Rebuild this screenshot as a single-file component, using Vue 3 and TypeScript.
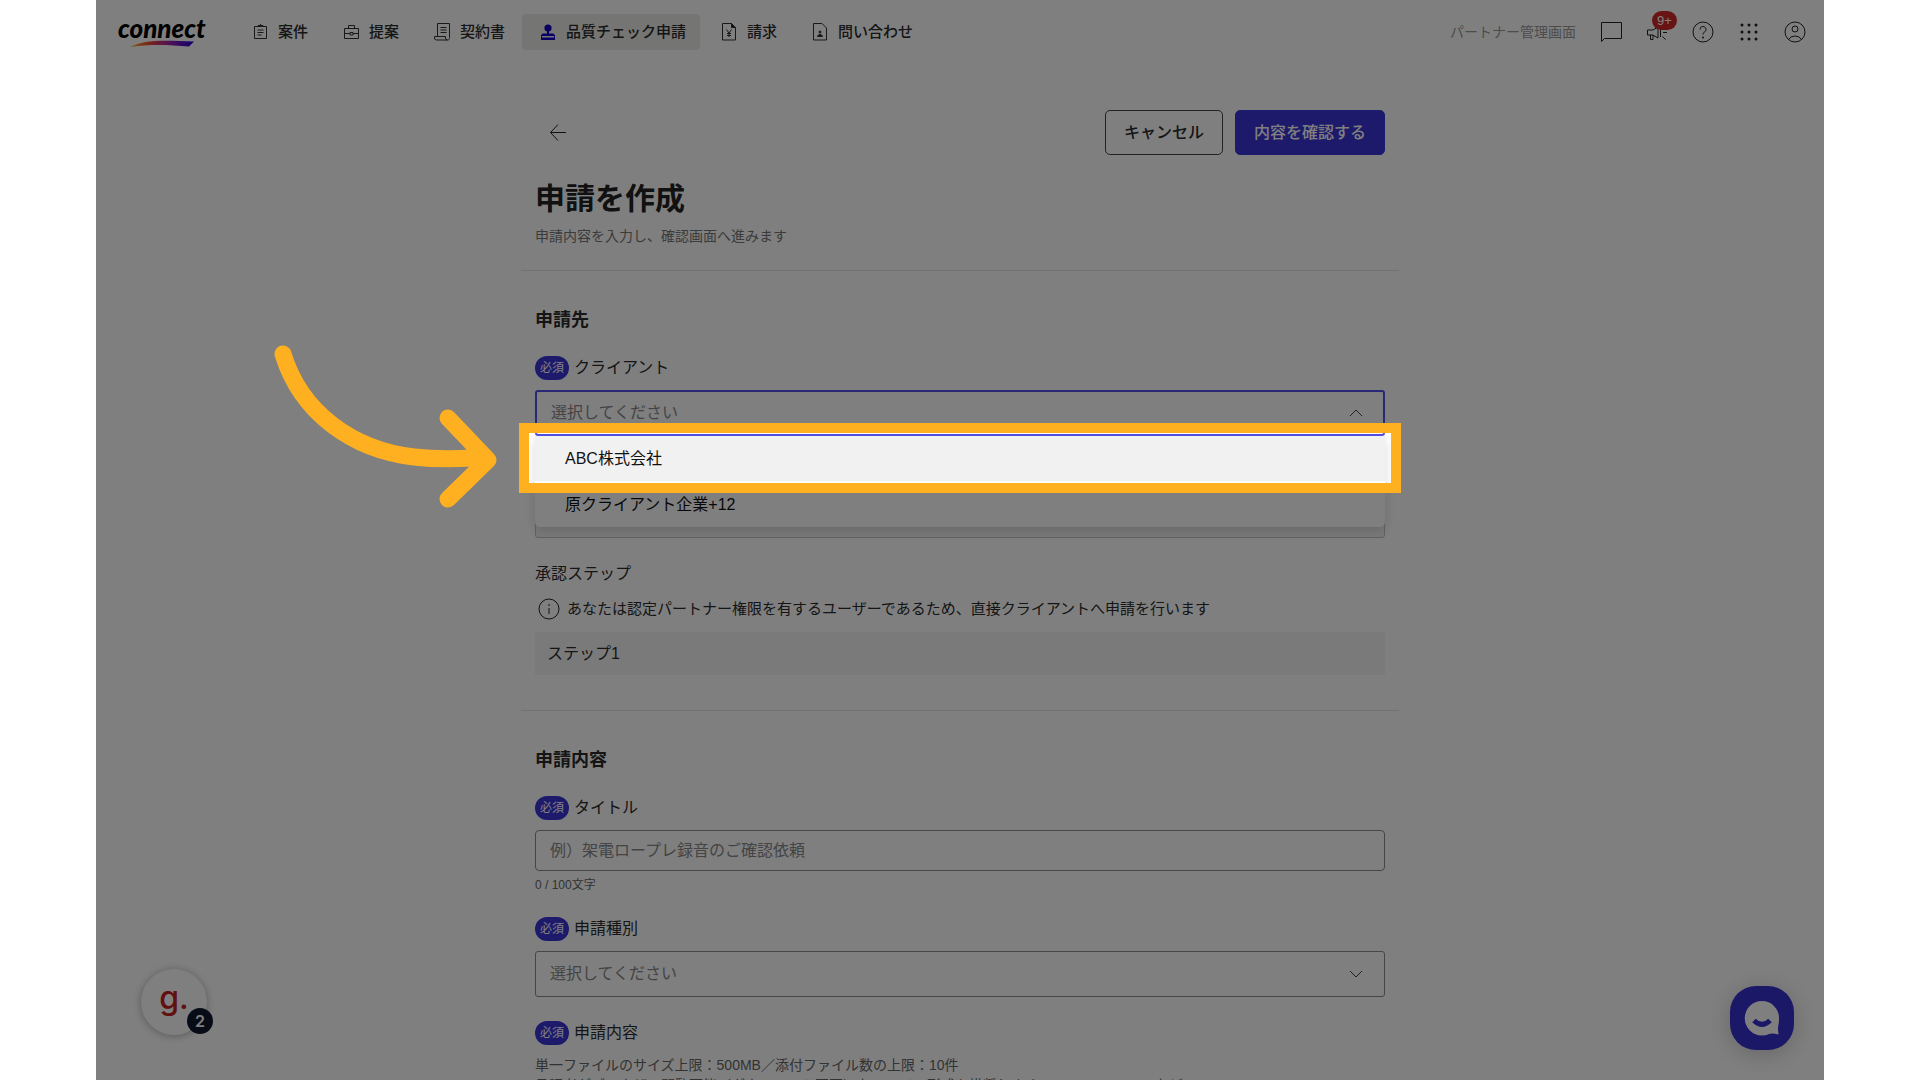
<script setup lang="ts">
import { ref } from 'vue'

interface NavItem {
  label: string
  icon: string
  active?: boolean
}

const navItems: NavItem[] = [
  { label: '案件', icon: 'clipboard' },
  { label: '提案', icon: 'case' },
  { label: '契約書', icon: 'scroll' },
  { label: '品質チェック申請', icon: 'stamp', active: true },
  { label: '請求', icon: 'invoice' },
  { label: '問い合わせ', icon: 'contact' },
]

const clients: string[] = ['ABC株式会社', '原クライアント企業+12']
const highlighted = ref(0)
const title = ref('')
</script>

<template>
  <div class="screen">
    <header class="header">
      <a class="logo" href="#" aria-label="connect">
        <span class="logo-text">connect</span>
        <svg class="logo-swoosh" viewBox="0 0 64 8" aria-hidden="true">
          <defs>
            <linearGradient id="swoosh" x1="0" x2="1">
              <stop offset="0" stop-color="#ffb020" />
              <stop offset=".3" stop-color="#f04a30" />
              <stop offset=".62" stop-color="#a020b0" />
              <stop offset="1" stop-color="#1a00e0" />
            </linearGradient>
          </defs>
          <path d="M0 7C14 0 30 0 64 1.500L59 6.500C40 5 20 4 0 7Z" fill="url(#swoosh)" />
        </svg>
      </a>

      <nav class="nav">
        <a
          v-for="item in navItems"
          :key="item.label"
          href="#"
          class="nav-item"
          :class="{ active: item.active }"
        >
          <svg class="nav-icon" viewBox="0 0 16 18" aria-hidden="true">
            <g v-if="item.icon === 'clipboard'">
              <path d="M2.500 3.500h12v12h-12zM6 3.500v-1h5v1M5.500 7h6M5.500 9.500h6M5.500 12h4" />
              <path d="M8.500 1v1.500" />
            </g>
            <g v-else-if="item.icon === 'case'">
              <path d="M1.500 5.500h14v10h-14zM5.500 5.500v-3h6v3M1.500 10.500h5.500M10 10.500h5.500M7 9.500h3v2.500h-3z" />
            </g>
            <g v-else-if="item.icon === 'scroll'">
              <path d="M3.500 13.500v-13h12v14a2 2 0 0 1-2 2.500h-11a2 2 0 0 1-2-2v-1.500h11v1.500a2 2 0 0 0 2 2M6.500 4.500h6M6.500 7h6M6.500 9.500h6" />
            </g>
            <g v-else-if="item.icon === 'stamp'" class="solid">
              <circle cx="8" cy="5" r="3.600" />
              <path d="M7 8h2v3H7z" />
              <path d="M1.500 13v-1a1.500 1.500 0 0 1 1.500-1.500h10a1.500 1.500 0 0 1 1.500 1.500v1zM1 14.500h14v2.500H1z" />
              <path class="line" d="M1.500 12v4M14.500 12v4" />
            </g>
            <g v-else-if="item.icon === 'invoice'">
              <path d="M1.500.500h9l4 4v12.500h-13zM5.500 6.500l2.500 3.500 2.500-3.500M8 10v4M6 10.500h4M6 12.500h4" />
              <path class="fill" d="M10.500.500v4h4z" />
            </g>
            <g v-else>
              <path d="M1.500.500h8.500l4.500 4.500v12h-13z" />
              <circle class="fill" cx="8" cy="9" r="1" />
              <path class="fill" d="M5.500 13.500q.5-2 2.500-2t2.500 2z" />
            </g>
          </svg>
          <span>{{ item.label }}</span>
        </a>
      </nav>

      <div class="tools">
        <a class="admin-link" href="#">パートナー管理画面</a>
        <button class="tool" type="button" aria-label="チャット">
          <svg viewBox="0 0 22 22"><path d="M1.500 1.500h20v16h-17l-3 3z" /></svg>
        </button>
        <button class="tool" type="button" aria-label="お知らせ">
          <svg viewBox="0 0 22 22">
            <path d="M1.500 9h5.500l5-3v11l-5-3h-5.500zM4.500 14v4.500h2.500v-4.500M14.500 7v9M17 11.500h4M16.500 15.500l3 3" />
          </svg>
          <span class="count">9+</span>
        </button>
        <button class="tool" type="button" aria-label="ヘルプ">
          <svg viewBox="0 0 22 22">
            <circle cx="11" cy="11" r="10" />
            <path d="M8 8.500a3 3 0 1 1 4.500 2.500q-1.500 1-1.500 2.500" />
            <circle class="dot" cx="11" cy="16.500" r="1" />
          </svg>
        </button>
        <button class="tool" type="button" aria-label="アプリ一覧">
          <svg viewBox="0 0 22 22">
            <template v-for="y in [4, 11, 18]" :key="y">
              <circle v-for="x in [4, 11, 18]" :key="x" class="dot" :cx="x" :cy="y" r="1.500" />
            </template>
          </svg>
        </button>
        <button class="tool" type="button" aria-label="アカウント">
          <svg viewBox="0 0 22 22">
            <circle cx="11" cy="11" r="10" />
            <circle cx="11" cy="8" r="3" />
            <path d="M4.500 18.500q2-3.500 6.500-3.500t6.500 3.500" />
          </svg>
        </button>
      </div>
    </header>

    <main class="main">
      <section class="intro">
        <div class="actions">
          <button class="back" type="button" aria-label="戻る">
            <svg viewBox="0 0 18 18"><path d="M17 8.500H1.500M9 .500L1.500 8.500l7.500 8" /></svg>
          </button>
          <button class="btn outline" type="button">キャンセル</button>
          <button class="btn primary" type="button">内容を確認する</button>
        </div>
        <h1>申請を作成</h1>
        <p class="lead">申請内容を入力し、確認画面へ進みます</p>
      </section>

      <section class="block">
        <h2>申請先</h2>
        <label class="label" for="client"><span class="required">必須</span>クライアント</label>
        <div class="select-box open">
          <select id="client">
            <option>選択してください</option>
          </select>
          <svg class="chevron" viewBox="0 0 14 8"><path d="M1 7l6-6 6 6" /></svg>
          <ul class="menu" role="listbox">
            <li
              v-for="(client, index) in clients"
              :key="client"
              role="option"
              :aria-selected="index === highlighted"
              :class="{ hover: index === highlighted }"
            >
              {{ client }}
            </li>
          </ul>
          <div class="spotlight"></div>
          <svg class="pointer" viewBox="0 0 224 164" aria-hidden="true">
            <path d="M10 9C28 68 80 105 141 112Q167 115 200 113M175 73L215 115L175 154" />
          </svg>
        </div>
        <div class="select-box approver">
          <select disabled aria-label="申請先"></select>
        </div>

        <h3>承認ステップ</h3>
        <p class="info">
          <svg viewBox="0 0 22 22"><circle cx="11" cy="11" r="10" /><path d="M11 10v6M11 6v2" /></svg>
          あなたは認定パートナー権限を有するユーザーであるため、直接クライアントへ申請を行います
        </p>
        <div class="step">ステップ1</div>
      </section>

      <section class="block">
        <h2>申請内容</h2>
        <label class="label" for="title"><span class="required">必須</span>タイトル</label>
        <input id="title" v-model="title" class="text" type="text" placeholder="例）架電ロープレ録音のご確認依頼" />
        <p class="counter">{{ title.length }} / 100文字</p>

        <label class="label next" for="kind"><span class="required">必須</span>申請種別</label>
        <div class="select-box">
          <select id="kind">
            <option>選択してください</option>
          </select>
          <svg class="chevron" viewBox="0 0 14 8"><path d="M1 1l6 6 6-6" /></svg>
        </div>

        <div class="label next"><span class="required">必須</span>申請内容</div>
        <p class="note">単一ファイルのサイズ上限：500MB／添付ファイル数の上限：10件</p>
        <p class="note">承認者がブラウザで閲覧可能（ダウンロード不要）なファイル形式を推奨します。PDF, MP4, MP3 など</p>
      </section>
    </main>

    <button class="guide-widget" type="button">
      <span class="guide-mark">g.</span>
      <span class="guide-count">2</span>
    </button>
    <button class="chat-widget" type="button" aria-label="チャットを開く">
      <svg viewBox="0 0 64 64">
        <path class="bubble" d="M32 15a17 17 0 1 0 0 34.500q4 0 7-1.500 4-1 9 .500.500-.500.500-1-1-5 0-9 .500-2 .500-6A17 17 0 0 0 32 15Z" />
        <path class="smile" d="M24 34.500q8 8 16 0" />
      </svg>
    </button>
  </div>
</template>

<style>
html,
body {
  margin: 0;
  background: #fff;
}
</style>

<style scoped>
* {
  box-sizing: border-box;
}

.screen {
  position: relative;
  width: 90%;
  height: 100vh;
  margin: 0 auto;
  overflow: hidden;
  background: #fff;
  color: #2b2b2b;
  font-family: 'Liberation Sans', 'Noto Sans CJK JP', sans-serif;
  font-size: 16px;
}

button,
input,
select {
  margin: 0;
  font: inherit;
  color: inherit;
}

h1,
h2,
h3,
p,
ul {
  margin: 0;
  padding: 0;
}

a {
  color: inherit;
  text-decoration: none;
}

svg {
  fill: none;
  stroke: #222;
}

/* Header */
.header {
  display: flex;
  align-items: center;
  height: 64px;
  padding: 0 18px 0 22px;
}

.logo {
  display: flex;
  flex-direction: column;
  width: 116px;
}

.logo-text {
  color: #000;
  font: italic 900 26px/22px Lato, sans-serif;
}

.logo-swoosh {
  width: 64px;
  height: 8px;
  margin: 1px 0 0 12px;
  stroke: none;
}

.nav {
  display: flex;
  gap: 3px;
}

.nav-item {
  display: flex;
  align-items: center;
  gap: 10px;
  height: 36px;
  padding: 0 14px 0 18px;
  border-radius: 4px;
  font-size: 15px;
  font-weight: 500;
  line-height: 24px;
  white-space: nowrap;
}

.nav-item.active {
  background: #ebebe8;
}

.nav-icon {
  width: 16px;
  height: 18px;
  stroke: #333;
}

.nav-icon .fill {
  fill: #222;
}

.nav-icon .solid {
  fill: #1400c8;
  stroke: none;
}

.nav-icon .solid .line {
  stroke: #1400c8;
}

.tools {
  display: flex;
  align-items: center;
  gap: 24px;
  margin-left: auto;
}

.admin-link {
  color: #999;
  font-size: 14px;
  line-height: 20px;
  padding-bottom: 1px;
  white-space: nowrap;
}

.tool {
  position: relative;
  width: 22px;
  height: 22px;
  padding: 0;
  border: 0;
  background: none;
}

.tool svg {
  display: block;
  width: 22px;
  height: 22px;
}

.tool .dot {
  fill: #222;
  stroke: none;
}

.count {
  position: absolute;
  top: -10px;
  left: 6px;
  width: 25px;
  height: 19px;
  border-radius: 10px;
  background: #d02828;
  color: #fff;
  font-size: 13px;
  line-height: 20px;
  text-align: center;
}

/* Form column */
.main {
  max-width: 878px;
  margin: 0 auto;
}

.intro {
  padding: 46px 14px 24px;
  border-bottom: 1px solid #e4e4e4;
}

.actions {
  display: flex;
  align-items: center;
  gap: 12px;
}

.back {
  width: 46px;
  height: 45px;
  margin-right: auto;
  padding: 0;
  border: 0;
  background: none;
}

.back svg {
  display: block;
  width: 18px;
  height: 18px;
  margin: 0 auto;
}

.btn {
  height: 45px;
  padding: 0 18px 3px;
  border: 1px solid #444;
  border-radius: 5px;
  background: #fff;
  font-weight: 500;
  white-space: nowrap;
}

.btn.primary {
  border-color: #3a36dc;
  background: #3a34d8;
  color: #fff;
}

h1 {
  margin-top: 24px;
  color: #222;
  font-size: 30px;
  font-weight: 700;
  line-height: 40px;
}

.lead {
  margin-top: 7px;
  color: #777;
  font-size: 14px;
  line-height: 20px;
}

.block {
  padding: 37px 14px 35px;
  border-bottom: 1px solid #e4e4e4;
}

h2 {
  margin-bottom: 24px;
  font-size: 18px;
  font-weight: 700;
  line-height: 24px;
}

.label {
  display: flex;
  align-items: center;
  gap: 5px;
  height: 24px;
  margin-bottom: 10px;
  line-height: 22px;
  padding-bottom: 1px;
}

.label.next {
  margin-top: 24px;
}

.required {
  width: 34px;
  height: 24px;
  border-radius: 12px;
  background: #3a34d8;
  color: #fff;
  font-size: 12px;
  line-height: 24px;
  text-align: center;
}

.select-box {
  position: relative;
}

select,
.text {
  display: block;
  width: 100%;
  padding: 0 14px;
  border: 1px solid #8c8c8c;
  border-radius: 3px;
  background: #fff;
  color: #888;
  appearance: none;
  outline: none;
}

select {
  height: 46px;
  padding-bottom: 2px;
}

.text {
  height: 41px;
  border-radius: 4px;
}

.text::placeholder {
  color: #888;
  opacity: 1;
}

.open select {
  border: 2px solid #5450e8;
}

.approver {
  margin-top: 56px;
}

.approver select {
  border-color: #c4c4c4;
  background: #f4f4f4;
  opacity: 1;
}

.chevron {
  position: absolute;
  top: 19px;
  right: 22px;
  width: 14px;
  height: 8px;
  stroke: #444;
}

.menu {
  position: absolute;
  top: 46px;
  left: 0;
  right: 0;
  z-index: 2;
  border-radius: 0 0 5px 5px;
  background: #fff;
  box-shadow: 0 4px 12px rgba(0, 0, 0, 0.15);
  color: #111;
  list-style: none;
}

.menu li {
  height: 45px;
  padding: 0 30px;
  line-height: 45px;
}

.menu .hover {
  height: 46px;
  background: linear-gradient(#f1f1f1, #f1f1f1) 0 0 / 100% 45px no-repeat;
}

/* Everything outside the framed option is dimmed */
.spotlight {
  position: absolute;
  top: 33px;
  left: -16px;
  right: -16px;
  z-index: 10;
  height: 70px;
  border: 10px solid #ffb020;
  box-shadow: 0 0 0 3000px rgba(0, 0, 0, 0.5);
  pointer-events: none;
}

.pointer {
  position: absolute;
  top: -45px;
  left: -262px;
  z-index: 11;
  width: 224px;
  height: 164px;
  stroke: #ffb020;
  stroke-width: 17;
  stroke-linecap: round;
  stroke-linejoin: round;
  pointer-events: none;
}

h3 {
  margin-top: 24px;
  font-size: 16px;
  font-weight: 400;
  line-height: 24px;
}

.info {
  display: flex;
  align-items: center;
  gap: 7px;
  height: 24px;
  margin: 11px 0;
  padding-left: 3px;
  font-size: 15px;
  line-height: 24px;
  white-space: nowrap;
}

.info svg {
  width: 22px;
  height: 22px;
}

.step {
  height: 43px;
  padding: 0 12px;
  background: #f5f5f5;
  line-height: 43px;
}

.counter {
  margin-top: 5px;
  color: #666;
  font-size: 12px;
  line-height: 18px;
}

.counter + .label {
  margin-top: 23px;
}

.note {
  color: #666;
  font-size: 14px;
  line-height: 20px;
  white-space: nowrap;
}

/* Floating widgets */
.guide-widget {
  position: absolute;
  bottom: 45px;
  left: 45px;
  width: 66px;
  height: 66px;
  padding: 0;
  border: 0;
  border-radius: 50%;
  background: #fff;
  box-shadow: 0 1px 8px rgba(0, 0, 0, 0.3);
}

.guide-mark {
  display: block;
  padding-bottom: 8px;
  color: #c4201c;
  font: 500 32px/48px Inter, sans-serif;
}

.guide-count {
  position: absolute;
  right: -6px;
  bottom: 1px;
  width: 26px;
  height: 26px;
  border-radius: 50%;
  background: #10182e;
  color: #fff;
  font: 600 16px/27px Inter, sans-serif;
  text-align: center;
}

.chat-widget {
  position: absolute;
  right: 30px;
  bottom: 30px;
  width: 64px;
  height: 64px;
  padding: 0;
  border: 0;
  border-radius: 26px;
  background: #3830d0;
  box-shadow: 0 4px 24px rgba(0, 0, 0, 0.2);
}

.chat-widget svg {
  display: block;
  width: 64px;
  height: 64px;
}

.bubble {
  fill: #fff;
  stroke: none;
}

.smile {
  stroke: #3830d0;
  stroke-width: 5;
}
</style>
